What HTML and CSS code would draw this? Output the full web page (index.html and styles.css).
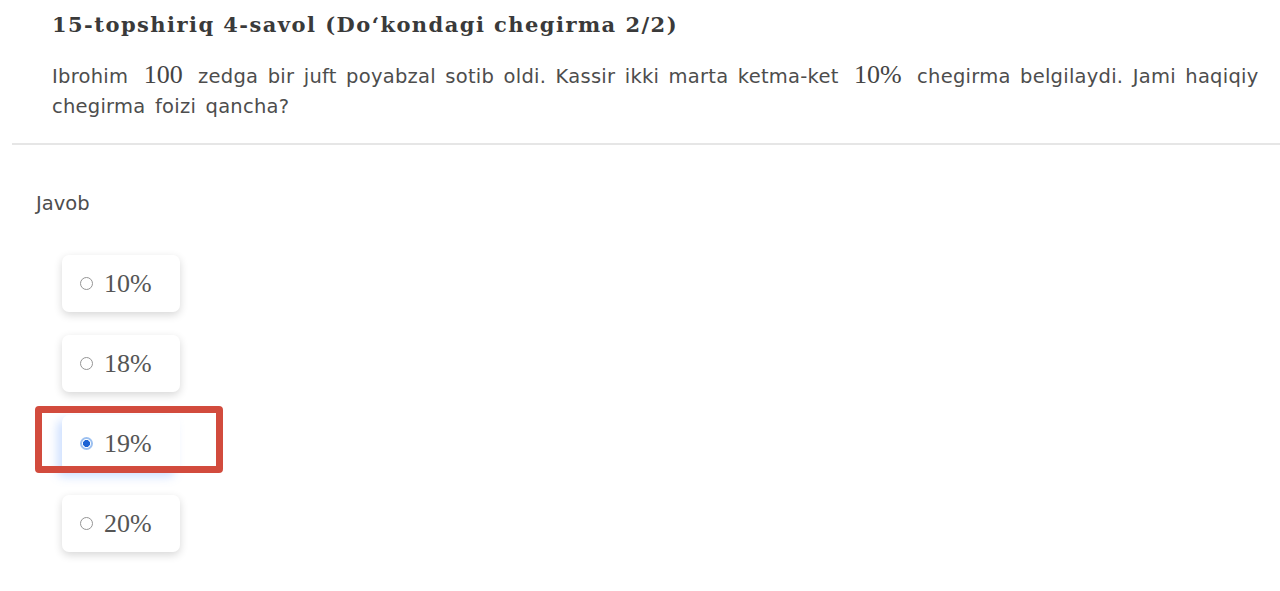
FILE: index.html
```html
<!DOCTYPE html>
<html lang="uz">
<head>
<meta charset="utf-8">
<title>15-topshiriq 4-savol</title>
<link rel="stylesheet" href="styles.css">
</head>
<body>
<div class="page">
  <header class="question">
    <h1 class="title">15-topshiriq 4-savol (Do‘kondagi chegirma 2/2)</h1>
    <p class="text">Ibrohim <span class="math">100</span> zedga bir juft poyabzal sotib oldi. Kassir ikki marta ketma-ket <span class="math">10%</span> chegirma belgilaydi. Jami haqiqiy chegirma foizi qancha?</p>
  </header>
  <hr class="sep">
  <section class="answer">
    <div class="label">Javob</div>
    <div class="options">
      <div class="option"><span class="radio"></span><span class="val">10%</span></div>
      <div class="option"><span class="radio"></span><span class="val">18%</span></div>
      <div class="option selected"><span class="radio checked"></span><span class="val">19%</span><span class="mark"></span></div>
      <div class="option"><span class="radio"></span><span class="val">20%</span></div>
    </div>
  </section>
</div>
</body>
</html>
```

FILE: styles.css
```css
html, body {
  margin: 0;
  padding: 0;
  background: #ffffff;
}
.page {
  width: 1280px;
  height: 591px;
  overflow: hidden;
}
.question {
  padding: 10px 0 0 52px;
}
.title {
  margin: 0;
  font-family: "DejaVu Serif", "Liberation Serif", serif;
  font-weight: bold;
  font-size: 21px;
  letter-spacing: 1.45px;
  line-height: 30px;
  color: #3a3a3a;
}
.text {
  margin: 22px 0 0 0;
  font-family: "DejaVu Sans", "Noto Sans", sans-serif;
  font-size: 19.5px;
  word-spacing: 3px;
  letter-spacing: 0.25px;
  line-height: 30px;
  color: #4d4d4d;
  width: 1220px;
}
.math {
  font-family: "Liberation Serif", serif;
  font-size: 26px;
  line-height: 20px;
  letter-spacing: 0;
  color: #444;
  padding: 0 6px;
}
.sep {
  margin: 21px 0 0 12px;
  border: 0;
  border-top: 2px solid #e6e6e6;
  height: 0;
}
.answer {
  padding: 44px 0 0 36px;
}
.label {
  font-family: "DejaVu Sans", "Noto Sans", sans-serif;
  font-size: 19.5px;
  line-height: 30px;
  color: #4d4d4d;
}
.options {
  display: flex;
  flex-direction: column;
  align-items: flex-start;
  gap: 23px;
  margin: 36px 0 0 26px;
}
.option {
  position: relative;
  display: flex;
  align-items: center;
  gap: 11px;
  width: 118px;
  height: 57px;
  box-sizing: border-box;
  padding-left: 18px;
  background: #fff;
  border-radius: 7px;
  box-shadow: 0 3px 9px rgba(0, 0, 0, 0.16);
}
.option.selected {
  box-shadow: -5px 5px 10px rgba(120, 170, 255, 0.35);
}
.radio {
  width: 13px;
  height: 13px;
  box-sizing: border-box;
  border: 1.5px solid #959595;
  border-radius: 50%;
}
.radio.checked {
  border: 2px solid #9cc0f0;
  background: radial-gradient(circle, #1d63d4 0 3.2px, #fff 3.8px);
}
.val {
  font-family: "Liberation Serif", serif;
  font-size: 26px;
  color: #555;
}
.mark {
  position: absolute;
  left: -27px;
  top: -9px;
  width: 188px;
  height: 67px;
  box-sizing: border-box;
  border: 7px solid #d24b3d;
  border-radius: 4px;
}
```
